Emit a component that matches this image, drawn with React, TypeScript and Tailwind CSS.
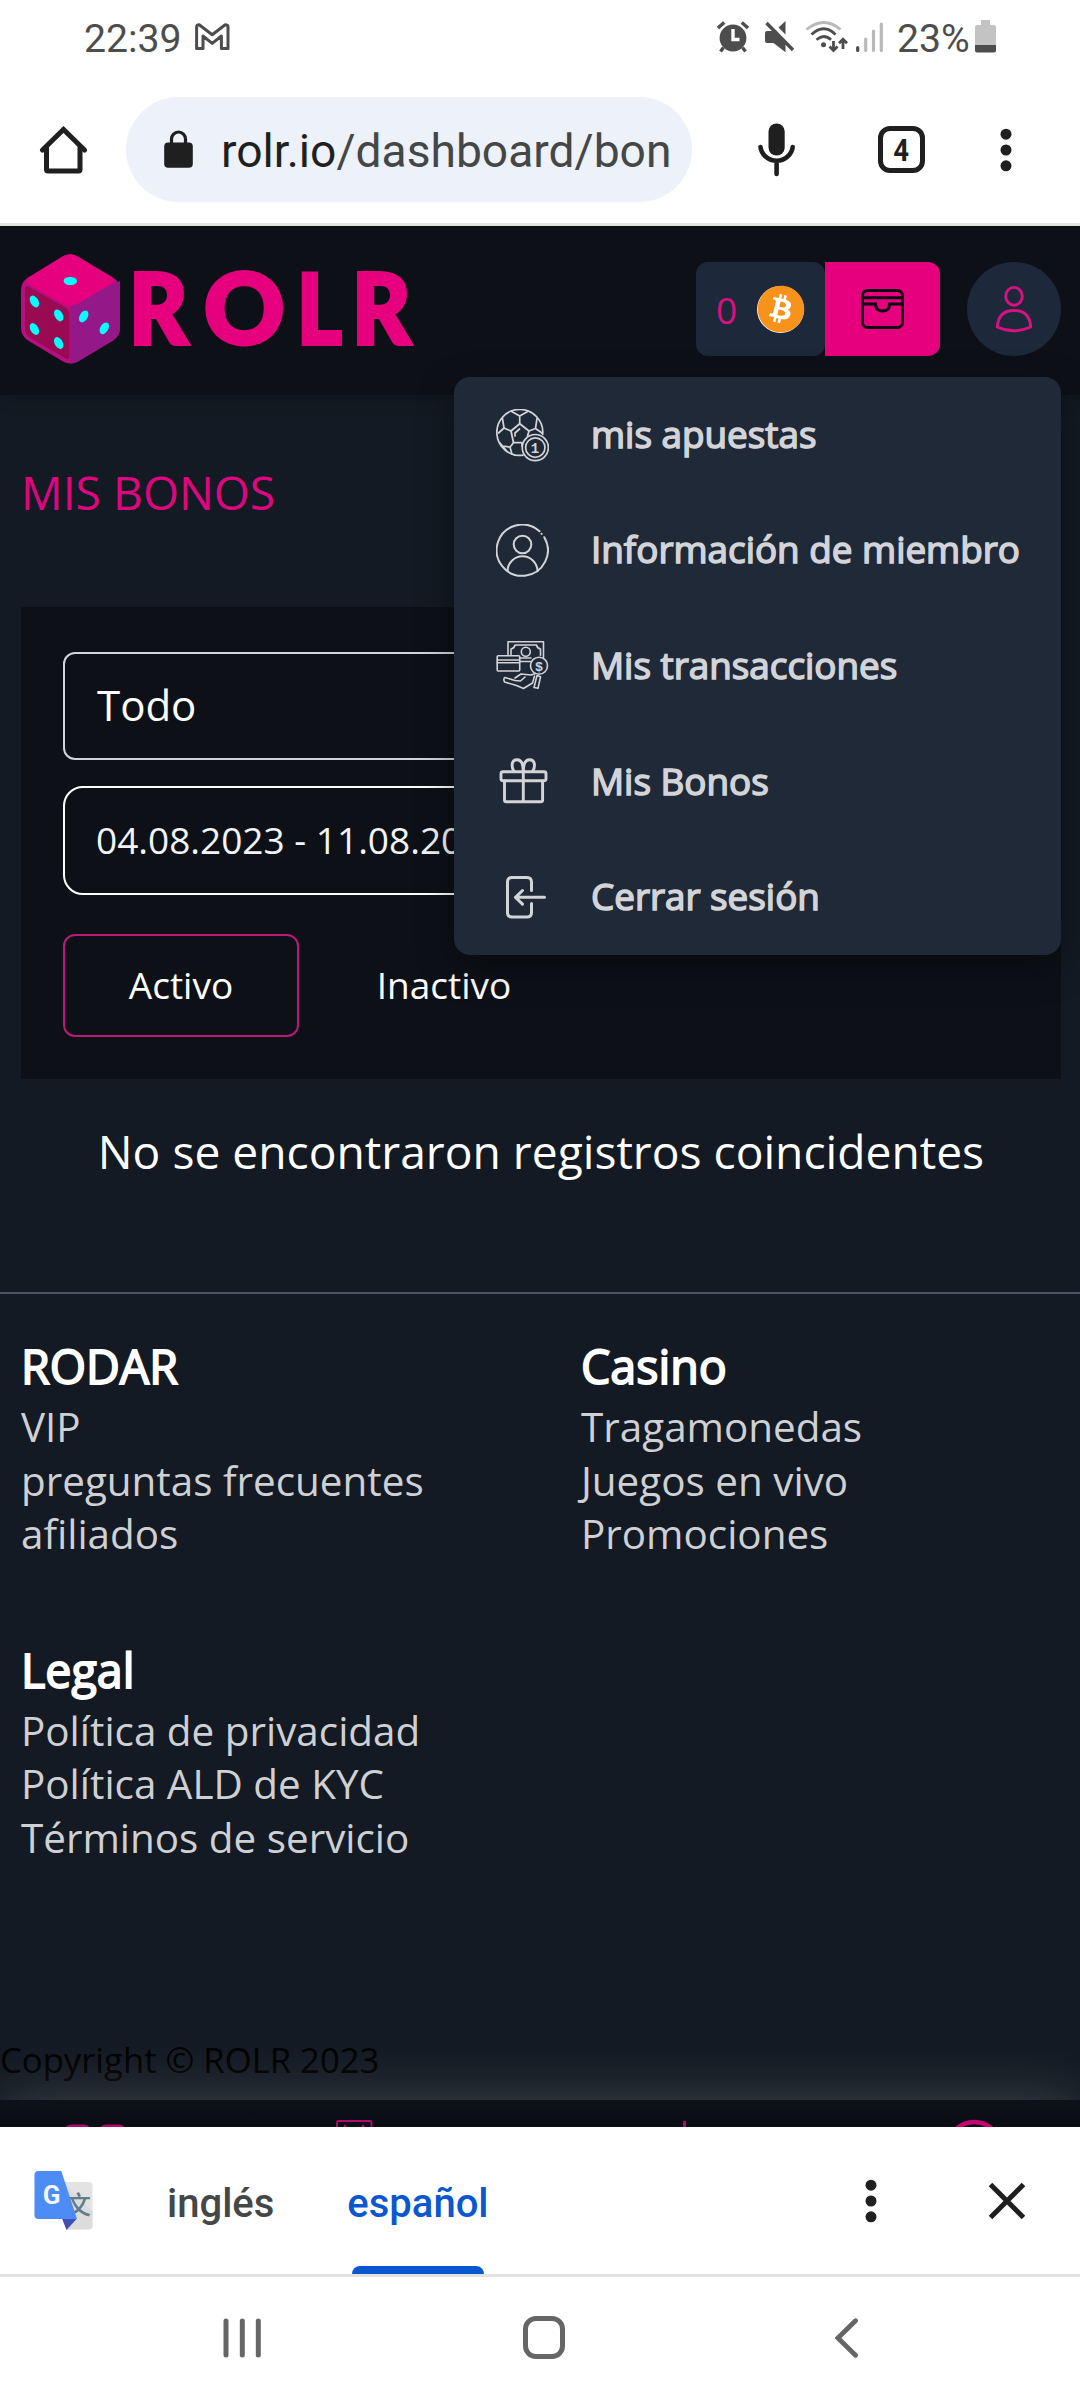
import React from 'react';
import { FaBitcoin } from 'react-icons/fa';

function StatusBar() {
  return (
    <div className="flex h-[75px] shrink-0 items-start font-[Roboto] text-[39.2px] leading-[50px] text-[#4d4d4d]">
      <span className="ml-[84px] mt-[14px] w-[111px]">22:39</span>
      <svg className="mt-[20px]" width="35" height="32" viewBox="195 20 35 32" fill="none" stroke="#4d4d4d" strokeWidth="3" strokeLinejoin="round">
        <path d="M196.6 48.6V27q0-2.2 2.6-2.2l13 10 13-10q2.8 0 2.8 2.2v21.6h-6.6V36l-9.2 7.4L203 36v12.6z" />
      </svg>
      <svg className="ml-[487px] mt-[18px]" width="168" height="36" viewBox="717 18 168 36" fill="none">
        <circle cx="733" cy="38" r="13.4" fill="#4d4d4d" />
        <path d="M733 29v10.5h6.5" stroke="#fff" strokeWidth="3.4" />
        <path d="M718 28l6.2-5.6M748 28l-6.2-5.6M723.5 47.5l-3 4M742.5 47.5l3 4" stroke="#4d4d4d" strokeWidth="3.4" />
        <path d="M765 33q0-2 2-2h6.5l12 12v9.2L773.5 43H767q-2 0-2-2zM785.5 21v13.5l-7-7z" fill="#4d4d4d" />
        <path d="M766.5 23l26.5 27" stroke="#4d4d4d" strokeWidth="3.4" />
        <path d="M806.5 29.5q17.500-14 34 0" stroke="#b9b9b9" strokeWidth="2.8" />
        <path d="M811.5 34.5q12.500-11.500 24 0M816.500 39.800q7.500-6.500 14.500 0" stroke="#4d4d4d" strokeWidth="2.8" />
        <circle cx="823.5" cy="44.8" r="2.5" fill="#4d4d4d" />
        <path d="M833.500 41v9M829.500 46.500l4 4 4-4M843 49v-9M839 43.300l4-4 4 4" stroke="#4d4d4d" strokeWidth="2.8" />
        <path d="M857.700 47.500v3" stroke="#4d4d4d" strokeWidth="3.2" strokeLinecap="round" />
        <path d="M865.700 39v11.500M873.500 31v19.500M881.300 24v26.500" stroke="#b9b9b9" strokeWidth="3.2" strokeLinecap="round" />
      </svg>
      <span className="ml-[12px] mt-[14px] w-[78px]">23%</span>
      <svg className="mt-[19px]" width="21" height="34" viewBox="975 19 21 34">
        <path d="M981 20h9v5h4q2 0 2 2v18h-21V27q0-2 2-2h4z" fill="#c3c3c3" />
        <path d="M975 45h21v5.500q0 2-2 2h-17q-2 0-2-2z" fill="#4d4d4d" />
      </svg>
    </div>
  );
}

function Dots() {
  return (
    <svg width="12" height="44" viewBox="0 0 12 44" fill="#1f1f1f">
      <circle cx="6" cy="6.2" r="5.5" />
      <circle cx="6" cy="22" r="5.5" />
      <circle cx="6" cy="37.8" r="5.5" />
    </svg>
  );
}

function BrowserBar() {
  return (
    <div className="flex h-[151px] shrink-0 items-center border-b-[3px] border-[#e1e3e1] text-[#1f1f1f]">
      <svg className="ml-[39px] mt-px" width="50" height="50" viewBox="39 124.5 50 50" fill="none" stroke="#1f1f1f" strokeWidth="5" strokeLinejoin="round" strokeLinecap="round">
        <path d="M42.500 149.500L63.500 129 84.500 149.500" strokeLinejoin="miter" />
        <path d="M46.500 147v22q0 1.500 1.500 1.500h30.500q1.500 0 1.500-1.500V147" />
      </svg>
      <div className="ml-[37px] mt-px flex h-[105px] w-[566px] items-center rounded-full bg-[#ecf1fa]">
        <svg className="ml-[37px]" width="31" height="40" viewBox="163 129.500 31 40">
          <rect x="164.200" y="142" width="28.600" height="25.300" rx="4" fill="#1f1f1f" />
          <path d="M171.500 144v-5.500a7 7 0 0 1 14 0v5.500" fill="none" stroke="#1f1f1f" strokeWidth="3.2" />
        </svg>
        <span className="ml-[27px] mt-[2px] whitespace-nowrap font-[Roboto] text-[46.2px] leading-[60px] text-[#444746]">
          <span className="text-[#1f1f1f]">rolr.io</span>/dashboard/bon
        </span>
      </div>
      <svg className="ml-[65px] mt-px" width="40" height="56" viewBox="757 121.500 40 56" fill="none" stroke="#1f1f1f" strokeWidth="4.600" strokeLinecap="round">
        <rect x="768.500" y="123" width="16.200" height="32" rx="8" fill="#1f1f1f" stroke="none" />
        <path d="M760.500 146.500a16.200 15.500 0 0 0 32.200 0M776.600 163v10.500" />
      </svg>
      <div className="ml-[81px] mt-px flex h-[47px] w-[47px] items-center justify-center rounded-[12px] border-[5px] border-[#1f1f1f]">
        <span className="origin-center scale-x-[0.86] font-[Roboto] text-[32px] font-bold leading-none">4</span>
      </div>
      <div className="ml-[75px] mt-px">
        <Dots />
      </div>
    </div>
  );
}

function DiceLogo() {
  return (
    <svg width="100" height="110" viewBox="0 0 100 110">
      <path d="M41.500 2.500Q49 -2 56.500 2.500L92 23.500Q99 28 99 36v37.500Q99 82 92 86.500L57 107.500Q49.500 111.500 42 107.500L7 86.500Q0 82 0 73.500V36Q0 28 7 23.500z" fill="#b70e80" />
      <path d="M49.500 50L99 27v46.500Q99 82 92 86.500L57 107.500q-3.500 2-7.500 2z" fill="#951889" />
      <path d="M41.500 2.500Q49 -2 56.500 2.500L90.500 23q4 4 0 6.500L56.500 50q-7 3.500-14 0L8 30.500q-4.500-3.500 0-7z" fill="#e6007e" />
      <path d="M4 34.500q0-4 4-1.800L43.500 53q5 3 5 9v41q0 3.500-3.800 1.500L9.500 84Q4 80.500 4 74.500z" fill="#9a0a52" />
      <g fill="#00ffff">
        <ellipse cx="49.300" cy="27" rx="6.700" ry="4.100" />
        <ellipse cx="13.400" cy="47.500" rx="4" ry="6.400" transform="rotate(-30 13.400 47.500)" />
        <ellipse cx="37.700" cy="61.300" rx="4" ry="6.400" transform="rotate(-30 37.700 61.300)" />
        <ellipse cx="13.400" cy="75" rx="4" ry="6.400" transform="rotate(-30 13.400 75)" />
        <ellipse cx="37.700" cy="89" rx="4" ry="6.400" transform="rotate(-30 37.700 89)" />
        <ellipse cx="62.700" cy="62.400" rx="4" ry="6.400" transform="rotate(30 62.700 62.400)" />
        <ellipse cx="83.300" cy="74.300" rx="4" ry="6.400" transform="rotate(30 83.300 74.300)" />
      </g>
    </svg>
  );
}

const line = { fill: 'none', stroke: '#d3d4d8', strokeLinecap: 'round', strokeLinejoin: 'round' } as const;

function BetsIcon() {
  return (
    <svg className="mt-[2px]" width="53" height="53" viewBox="0 0 53 53" {...line} strokeWidth="1.700">
      <path d="M27 46.200A23 23 0 1 1 46.700 25.500" />
      <path d="M23.700 14.800l9.300 7.200-1.500 5M17.500 33.700L15 22l8.700-7.200M17.500 33.700h8.500" strokeWidth="1.800" />
      <path d="M23.700 14.800V7M23.700 7l-8-4.500M23.700 7l8-4.500M15 22l-7-3-5.500 5M8 19L6.500 9.500M33 22l6.500-2.500L46 24M39.500 19.500L41 9.500M17.500 33.700l-3.500 4.500 2 7M14 38.200l-9-1.500M11 42.500L4 34M26 34v3M19 27v-3l4.500-4" />
      <circle cx="39.300" cy="38.600" r="13.100" />
      <circle cx="39.300" cy="38.600" r="9.700" />
      <text x="39" y="43.600" textAnchor="middle" fontFamily="Liberation Mono" fontWeight="700" fontSize="14" fill="#d3d4d8" stroke="none">1</text>
    </svg>
  );
}

function MemberIcon() {
  return (
    <svg width="53" height="53" viewBox="0 0 53 53" {...line} strokeWidth="2">
      <path d="M48.300 13.200A25.600 25.600 0 1 1 43.500 7.300" />
      <path d="M45.500 9.700l.2.200" />
      <circle cx="26.500" cy="20.500" r="8.800" />
      <path d="M11.500 47.300a15 15 0 0 1 30 0" />
    </svg>
  );
}

function MoneyIcon() {
  return (
    <svg width="53" height="53" viewBox="0 0 53 53" {...line} strokeWidth="1.600">
      <path d="M12 15.500V2.800h35.500v16M24 22.500h10.500" />
      <path d="M15 15.500V10q3.500-1 4-4h21.500q.5 3 4 4v6.500M24 19h11" />
      <circle cx="29.800" cy="12.800" r="4.500" />
      <rect x="1.200" y="16.800" width="22.500" height="15.200" rx="1" />
      <path d="M1.200 21h22.500M1.200 23.700h22.500" />
      <circle cx="43" cy="26.700" r="8.500" />
      <path d="M19 39l6-4 10 1 4.500-1.500M19 41.500l5.500.5 4.500-4M19 41.500l-10-3q-2 1-.5 4.500l12 3.500 7 3 9-5.500 2-7M41 36.500l-3 12 4 .8 2.500-11.500z" />
      <text x="43" y="31.700" textAnchor="middle" fontFamily="Liberation Sans" fontWeight="700" fontSize="13.500" fill="#d3d4d8" stroke="none">$</text>
    </svg>
  );
}

function GiftIcon() {
  return (
    <svg width="53" height="53" viewBox="0 0 53 53" {...line} strokeWidth="2.900">
      <rect x="5" y="16.800" width="45" height="9" rx="2" />
      <path d="M8.500 26v19q0 1.800 1.800 1.800h34.500q1.800 0 1.800-1.800V26M27.300 10v36.800" />
      <path d="M27.300 16.500q0-11.700-6.200-11.700-5 0-5 5.700 0 3 2 6M27.300 16.500q0-11.700 6.200-11.700 5 0 5 5.700 0 3-2 6" />
    </svg>
  );
}

function LogoutIcon() {
  return (
    <svg width="53" height="53" viewBox="0 0 53 53" {...line} strokeWidth="3">
      <path d="M35.500 19.500V11q0-4.500-4.500-4.500H16Q11.500 6.500 11.500 11v30.500q0 4.500 4.500 4.500h15q4.500 0 4.500-4.500V32.500M48.500 26.300H20M26.500 19.500l-7 6.800 7 6.800" />
    </svg>
  );
}

const menu = [
  { label: 'mis apuestas', Icon: BetsIcon },
  { label: 'Información de miembro', Icon: MemberIcon },
  { label: 'Mis transacciones', Icon: MoneyIcon },
  { label: 'Mis Bonos', Icon: GiftIcon },
  { label: 'Cerrar sesión', Icon: LogoutIcon },
];

function AccountMenu() {
  return (
    <nav className="absolute right-[19px] top-[151px] z-20 flex h-[578px] w-[607px] flex-col rounded-[16px] bg-[#202937] shadow-[0_12px_36px_rgba(0,0,0,0.4)]">
      {menu.map(({ label, Icon }) => (
        <a key={label} className="flex flex-1 items-center gap-[42px] pl-[42px] text-[36.850px] leading-[50px] text-[#d3d4d8] [-webkit-text-stroke:1.500px_#d3d4d8]">
          <Icon />
          <span className="mb-[2px]">{label}</span>
        </a>
      ))}
    </nav>
  );
}

function SiteHeader() {
  return (
    <header className="relative z-10 flex h-[169px] shrink-0 items-center bg-[#0d1117] shadow-[0_4px_16px_rgba(0,0,0,0.15)]">
      <div className="mb-[3px] ml-[21px]">
        <DiceLogo />
      </div>
      <div className="mb-[8px] ml-[8px] flex font-[Lato] text-[97px] font-black leading-none text-[#e6007e] [-webkit-text-stroke:4px_#e6007e]">
        <span className="w-[74.500px] origin-left scale-x-[0.93]">R</span>
        <span className="w-[93.800px] origin-left scale-x-[1.022]">O</span>
        <span className="w-[55px] origin-left scale-x-[0.88]">L</span>
        <span className="w-[70px] origin-left scale-x-[0.93]">R</span>
      </div>
      <div className="absolute right-[19px] top-[36px] flex items-center">
        <div className="flex h-[94px] w-[129px] items-center rounded-[12px] bg-[#1e283b]">
          <span className="ml-[20px] mt-[2px] w-[41px] text-[37px] text-[#d5127f]">0</span>
          <span className="flex size-[47px] items-center justify-center rounded-full bg-white">
            <FaBitcoin className="size-[48px] shrink-0 text-[#f7931a]" />
          </span>
        </div>
        <div className="flex h-[94px] w-[115px] items-center justify-center rounded-r-[12px] bg-[#e6007e]">
          <svg width="43" height="40" viewBox="0 0 43 40" fill="none" stroke="#0d0712" strokeWidth="3">
            <rect x="1.500" y="1.500" width="40" height="37" rx="5" />
            <path d="M1.500 8.700h40M1.500 17q0-2 2-2h11q0 7 7 7t7-7h11q2 0 2 2" />
          </svg>
        </div>
        <div className="ml-[27px] flex size-[94px] items-center justify-center rounded-full bg-[#1e283b]">
          <svg width="38" height="48" viewBox="0 0 38 48" fill="none" stroke="#d5127f" strokeWidth="2.900" strokeLinejoin="round">
            <ellipse cx="19" cy="11.300" rx="8.300" ry="8.900" />
            <path d="M2.300 42q1-16.500 16.700-16.500T35.700 42Q19 49.500 2.300 42z" />
          </svg>
        </div>
      </div>
      <AccountMenu />
    </header>
  );
}

function FooterColumn({ title, items }: { title: string; items: string[] }) {
  return (
    <div>
      <h3 className="text-[46.600px] leading-[63px] text-white [-webkit-text-stroke:1.800px_#fff]">{title}</h3>
      <ul className="pt-[2px] text-[40.400px] leading-[53.500px] text-[#cfd0d3]">
        {items.map((item) => (
          <li key={item}>{item}</li>
        ))}
      </ul>
    </div>
  );
}

function BottomNav() {
  return (
    <div className="relative mt-[15px] flex h-[80px] shrink-0 bg-linear-to-b from-[#0d1118] to-[#06050c] shadow-[0_0_62px_rgba(255,255,255,0.19)]">
      <svg width="1080" height="27" viewBox="0 2100 1080 27" fill="none" stroke="#b00a6c">
        <rect x="64" y="2124.500" width="27" height="27" rx="7" fill="#b00a6c" stroke="none" />
        <rect x="99" y="2124.500" width="27" height="27" rx="7" fill="#b00a6c" stroke="none" />
        <rect x="337" y="2121" width="34.500" height="30" rx="1.500" strokeWidth="1.900" />
        <path d="M345 2124l-3 5h6zM363 2124l-3 5h6z" fill="#b00a6c" stroke="none" />
        <path d="M684.500 2122v20" strokeWidth="3" strokeLinecap="round" />
        <circle cx="974.300" cy="2148.500" r="26.500" stroke="#c20770" strokeWidth="4.600" />
      </svg>
    </div>
  );
}

function TranslateBar() {
  return (
    <div className="flex h-[150px] shrink-0 items-center border-b-[3px] border-[#e1e3e1] bg-white font-[Roboto] text-[40px] font-medium">
      <svg className="ml-[34px] mt-px" width="60" height="62" viewBox="34 2170 60 62">
        <path d="M62 2182h26.500q4 0 4 4v39.500q0 4-4 4H67z" fill="#e3e3e3" />
        <path d="M64 2182l28.500 29v14.500q0 4-4 4H67z" fill="#d6d6d6" opacity="0.500" />
        <text x="78.500" y="2214" textAnchor="middle" fontFamily="Noto Sans CJK SC" fontSize="25" fill="#607d8b" fontWeight="500">文</text>
        <path d="M62 2218.500h15l-10.500 11.500z" fill="#4150b5" />
        <path d="M38.500 2171h22.800L77 2219H38.500q-4 0-4-4v-40q0-4 4-4z" fill="#4d8cf5" />
        <text x="51.500" y="2203.500" textAnchor="middle" fontFamily="Roboto" fontWeight="700" fontSize="26" fill="#f1f5fe">G</text>
      </svg>
      <span className="ml-[73px] mt-[6px] text-[#444746]">inglés</span>
      <div className="relative ml-[73px] flex h-full items-center text-[#0b57d0]">
        <span className="mt-[6px]">español</span>
        <span className="absolute bottom-0 left-[5px] h-[8px] w-[132px] rounded-t-[8px] bg-[#0b57d0]" />
      </div>
      <div className="ml-auto mr-[110px]">
        <Dots />
      </div>
      <svg className="mr-[53px]" width="40" height="40" viewBox="0 0 40 40" stroke="#1f1f1f" strokeWidth="5">
        <path d="M3.500 3.500l33 33M36.500 3.500l-33 33" />
      </svg>
    </div>
  );
}

function SystemNav() {
  return (
    <div className="flex h-[123px] shrink-0 items-center bg-white pb-[2px]">
      <svg className="ml-[223px]" width="38" height="40" viewBox="0 0 38 40" stroke="#666" strokeWidth="5" strokeLinecap="round">
        <path d="M3 3v34M19.300 3v34M35.300 3v34" />
      </svg>
      <div className="ml-[262px] h-[43px] w-[42px] rounded-[13px] border-[5px] border-[#666]" />
      <svg className="ml-[270px]" width="24" height="40" viewBox="0 0 24 40" fill="none" stroke="#666" strokeWidth="4.800" strokeLinecap="round">
        <path d="M20.500 2.800L3 20l17.500 17.200" />
      </svg>
    </div>
  );
}

export default function App() {
  return (
    <div className="flex h-[2400px] w-[1080px] flex-col overflow-hidden bg-white font-['Open_Sans',sans-serif]">
      <StatusBar />
      <BrowserBar />
      <div className="flex h-[1901px] shrink-0 flex-col overflow-hidden bg-[#131a23]">
        <SiteHeader />
        <main className="flex flex-col pl-[21px] pr-[19px] pt-[68px] text-white">
          <h1 className="text-[46.300px] leading-[60px] text-[#dc067e]">MIS BONOS</h1>
          <section className="mt-[84px] flex h-[472px] flex-col bg-[#0d1117] px-[42px] pt-[45px]">
            <div className="flex h-[108px] items-center rounded-[12px] border-2 border-[#d1d5db] pb-[3px] pl-[32px] text-[42px]">Todo</div>
            <div className="mt-[26px] flex h-[109px] items-center rounded-[20px] border-2 border-white pb-px pl-[31px] text-[37px] text-[#f3f4f6]">
              04.08.2023 - 11.08.2023
            </div>
            <div className="mt-[39px] flex h-[103px] gap-[11px] text-[37px]">
              <button className="flex w-[236px] items-center justify-center rounded-[12px] border-2 border-[#b81a78] pb-[2px]">Activo</button>
              <button className="flex w-[268px] items-center justify-center pb-[2px]">Inactivo</button>
            </div>
          </section>
          <p className="mt-[43px] text-center text-[46.200px] leading-[60px]">No se encontraron registros coincidentes</p>
        </main>
        <footer className="mt-[110px] border-t-2 border-[#4b5563] pt-[41px]">
          <div className="grid grid-cols-[560px_1fr] gap-y-[78px] pl-[21px]">
            <FooterColumn title="RODAR" items={['VIP', 'preguntas frecuentes', 'afiliados']} />
            <FooterColumn title="Casino" items={['Tragamonedas', 'Juegos en vivo', 'Promociones']} />
            <FooterColumn title="Legal" items={['Política de privacidad', 'Política ALD de KYC', 'Términos de servicio']} />
          </div>
          <p className="mt-[171px] text-[34.650px] leading-[50px] text-black">Copyright © ROLR 2023</p>
        </footer>
        <BottomNav />
      </div>
      <TranslateBar />
      <SystemNav />
    </div>
  );
}
